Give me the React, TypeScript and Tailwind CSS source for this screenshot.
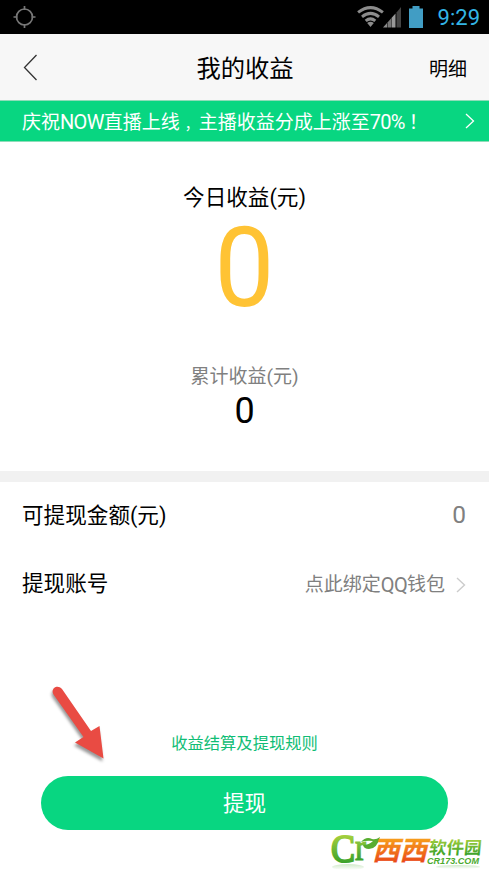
const rowClass = "flex items-center justify-between pl-[22px] pr-[23px]";

function StatusBar() {
  return (
    <div className="flex h-[34px] items-center justify-between bg-black pl-[13px] pr-[9px]">
      <svg width="24" height="24" viewBox="0 0 24 24" fill="none" stroke="#777" strokeWidth="1.7" aria-hidden="true">
        <circle cx="11.5" cy="12" r="8" />
        <path d="M11.5 1v4M11.5 19v4M.5 12h4M18.5 12h4" />
      </svg>
      <div className="flex items-center">
        <svg width="27" height="22" viewBox="0 0 27 22" fill="none" stroke="#8c8c8c" strokeWidth="3" aria-hidden="true">
          <path d="M1.1 6.4Q13.5 -3.2 25.9 6.4" />
          <path d="M5 10.8Q13.5 4 22 10.8" />
          <path d="M8.7 14.9Q13.5 10.8 18.3 14.9" />
          <path d="M10.2 17.1Q13.5 14.5 16.8 17.1L13.5 21Z" fill="#8c8c8c" stroke="none" />
        </svg>
        <svg width="20" height="22" viewBox="0 0 20 22" className="-ml-[2px]" aria-hidden="true">
          <path d="M1 21.5L5 17v4.5Z" fill="#8c8c8c" />
          <path d="M5.5 16.5L9 12.5v9H5.5Z" fill="#777" />
          <path d="M9.5 12L13.5 7.5v14h-4Z" fill="#999" />
          <path d="M14.5 6.5L19 1v20.5h-4.5Z" fill="#444" />
        </svg>
        <svg width="14" height="22" viewBox="0 0 14 22" className="ml-[7px]" aria-hidden="true">
          <path d="M0 2.5h3.5V0h7v2.5H14V22H0Z" fill="#419dc4" />
        </svg>
        <span className="ml-[15px] mt-px text-[22px] leading-none text-[#33b5e5]">9:29</span>
      </div>
    </div>
  );
}

function Arrow() {
  return (
    <svg
      width="70"
      height="90"
      viewBox="0 0 70 90"
      className="absolute left-[45px] top-[680px] drop-shadow-[-1px_3px_1.5px_rgba(0,0,0,0.4)]"
      aria-hidden="true"
    >
      <path
        d="M8.5 14.5L38.5 57 30 62.5 58.5 78.5 54.5 46 46 51 17 9C12.5 3.5 5 8.5 8.5 14.5Z"
        fill="#e94b43"
      />
    </svg>
  );
}

function Watermark() {
  return (
    <svg width="162" height="46" viewBox="0 0 162 46" className="absolute left-[327px] top-[825px] overflow-visible" aria-hidden="true">
      <defs>
        <linearGradient id="green" x1="0" y1="0" x2="0" y2="1">
          <stop offset="0.2" stopColor="#a4cf3e" />
          <stop offset="0.9" stopColor="#2f9d28" />
        </linearGradient>
        <linearGradient id="orange" x1="0" y1="0" x2="0" y2="1">
          <stop offset="0.2" stopColor="#f8a51c" />
          <stop offset="0.9" stopColor="#e94418" />
        </linearGradient>
        <linearGradient id="fade" x1="0" y1="0" x2="0" y2="1">
          <stop offset="0" stopColor="#62b84b" stopOpacity="0.3" />
          <stop offset="1" stopColor="#62b84b" stopOpacity="0" />
        </linearGradient>
      </defs>
      <ellipse cx="21" cy="42" rx="16" ry="3" fill="url(#fade)" />
      <ellipse cx="131" cy="42" rx="22" ry="2" fill="url(#fade)" />
      <g fontFamily="'Liberation Serif', serif" fill="url(#green)" stroke="url(#green)">
        <text x="4" y="37" fontSize="39" strokeWidth="2" textLength="24" lengthAdjust="spacingAndGlyphs">C</text>
        <text x="28" y="35" fontSize="38" strokeWidth="1.2" textLength="11" lengthAdjust="spacingAndGlyphs">r</text>
      </g>
      <path d="M34 17Q39 11 45 14Q49 15 53 12Q50 24 42 24Q37 24 36 20Q42 20 46 16Q40 15 34 17Z" fill="#57ad30" />
      <g transform="translate(45 36) skewX(-14) scale(1.03 1)" fontFamily="'Noto Sans CJK SC', sans-serif" fontWeight="700">
        <text x="0" y="-1" fontSize="26.5" fill="url(#orange)" stroke="url(#orange)" strokeWidth="0.3">西西</text>
      </g>
      <g transform="translate(102 25) skewX(-6)" fontFamily="'Noto Sans CJK SC', sans-serif" fontWeight="700">
        <text x="0" y="4" fontSize="17.5" fill="url(#green)">软件园</text>
      </g>
      <text
        x="100"
        y="39"
        fontFamily="'Liberation Sans', sans-serif"
        fontSize="9.5"
        fontWeight="bold"
        fontStyle="italic"
        fill="#4cab2e"
        textLength="52"
        lengthAdjust="spacingAndGlyphs"
      >
        CR173.COM
      </text>
    </svg>
  );
}

export default function App() {
  return (
    <div className="relative flex h-[871px] w-[489px] flex-col overflow-hidden bg-white font-[Roboto,'Noto_Sans_CJK_SC',sans-serif] text-black">
      <StatusBar />

      <header className="grid h-[66px] grid-cols-3 items-center bg-[#f7f7f7] pl-[23px] pr-[22px]">
        <svg width="15" height="27" viewBox="0 0 15 27" fill="none" stroke="#333" strokeWidth="1.3" aria-hidden="true">
          <path d="M13.5 1L1.5 13.5 13.5 26" />
        </svg>
        <h1 className="mt-[4px] text-center text-[24.3px] leading-none">我的收益</h1>
        <a className="mt-[4px] text-right text-[19px] leading-none">明细</a>
      </header>

      <div className="flex h-[42px] items-center justify-between border-y border-[#8fdcb9] bg-[#08d681] pl-[22px] pr-[14px] text-white">
        <p className="mt-px whitespace-nowrap text-[19px] leading-none">
          庆祝<span className="text-[20px] tracking-[-0.7px]">NOW</span>直播上线
          <span className="ml-[5px] text-[14px]">，</span>主播收益分成上涨至
          <span className="text-[20px] tracking-[-0.7px]">70%</span>
          <span className="ml-[4px]">！</span>
        </p>
        <svg width="10" height="16" viewBox="0 0 10 16" fill="none" stroke="currentColor" strokeWidth="1.3" aria-hidden="true">
          <path d="M1 1l7.5 7L1 15" />
        </svg>
      </div>

      <section className="flex h-[329px] flex-col items-center pt-[44px]">
        <h2 className="text-[21.6px] leading-6">今日收益(元)</h2>
        <p className="mt-[2px] scale-x-95 text-[112px] leading-[112px] text-[#ffc334]">0</p>
        <h3 className="mt-[41px] text-[19px] leading-6 text-[#808080]">累计收益(元)</h3>
        <p className="mt-[4px] text-[36px] leading-9">0</p>
      </section>

      <div className="h-[11px] bg-[#f1f1f1]" />

      <section>
        <div className={`${rowClass} h-[68px]`}>
          <span className="text-[21.6px] leading-none">可提现金额(元)</span>
          <span className="mb-px text-[24.5px] leading-none text-[#808080]">0</span>
        </div>
        <div className={`${rowClass} h-[68px]`}>
          <span className="text-[21.6px] leading-none">提现账号</span>
          <a className="mt-px flex items-center text-[19px] leading-none text-[#808080]">
            点此绑定<span className="text-[20px] tracking-[-0.7px]">QQ</span>钱包
            <svg width="10" height="16" viewBox="0 0 10 16" fill="none" stroke="#ccc" strokeWidth="1.4" className="ml-[11px]" aria-hidden="true">
              <path d="M1 1l7.5 7L1 15" />
            </svg>
          </a>
        </div>
      </section>

      <footer className="mt-[116px] flex flex-col items-center">
        <a className="text-[16.3px] leading-5 text-[#10bd75]">收益结算及提现规则</a>
        <button className="mt-[22px] h-[54px] w-[407px] rounded-full bg-[#08d681] pt-[2px] text-[21.6px] text-white">提现</button>
      </footer>

      <Arrow />
      <Watermark />
    </div>
  );
}
